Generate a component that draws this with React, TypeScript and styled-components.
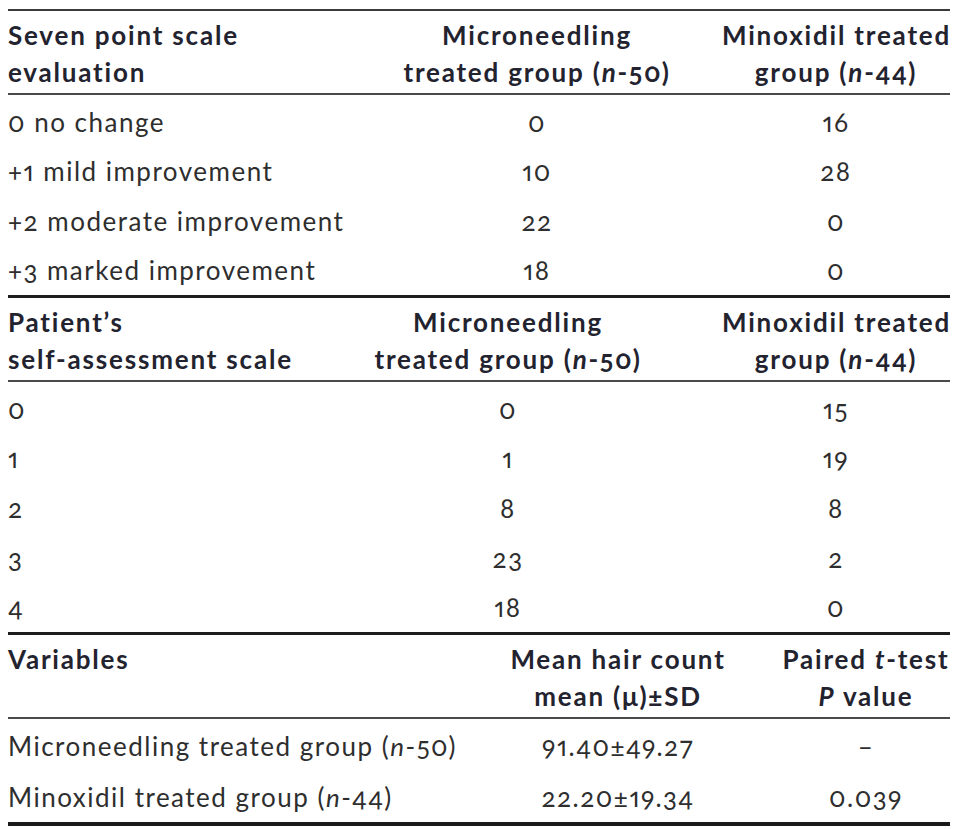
import styled, { createGlobalStyle } from "styled-components";

const GlobalStyle = createGlobalStyle`
  body {
    margin: 0;
    background: #ffffff;
  }
`;

const Page = styled.div`
  padding: 9px 12px 0 8px;
  width: 942px;
  font-family: "Lato", "Open Sans", sans-serif;
  font-variant-numeric: oldstyle-nums proportional-nums;
  font-feature-settings: "onum" 1;
  color: #2e2e2e;
`;

interface ISection {
  columns: string;
  top: "thin" | "thick";
}

const Section = styled.div<ISection>`
  display: grid;
  grid-template-columns: ${(props) => props.columns};
  border-top: ${(props) =>
    props.top === "thin" ? "2px solid #3a3a3a" : "3px solid #1c1c1c"};
`;

const Head = styled.div<{ align?: "left" | "center" }>`
  padding: 6px 0 2px;
  font-size: 26px;
  font-weight: 700;
  letter-spacing: 1.8px;
  line-height: 37px;
  color: #23232f;
  white-space: nowrap;
  text-align: ${(props) => props.align || "center"};
  border-bottom: 2px solid #4a4a4a;
  margin-bottom: 2px;
`;

const Cell = styled.div<{ align?: "left" | "center"; h: number }>`
  height: ${(props) => props.h}px;
  display: flex;
  align-items: center;
  justify-content: ${(props) =>
    props.align === "left" ? "flex-start" : "center"};
  font-size: 26px;
  letter-spacing: 1.5px;
  white-space: nowrap;
`;

const Bottom = styled.div`
  border-top: 4px solid #1a1a1a;
`;

const sevenPoint = [
  ["0 no change", "0", "16"],
  ["+1 mild improvement", "10", "28"],
  ["+2 moderate improvement", "22", "0"],
  ["+3 marked improvement", "18", "0"],
];

const selfAssessment = [
  ["0", "0", "15"],
  ["1", "1", "19"],
  ["2", "8", "8"],
  ["3", "23", "2"],
  ["4", "18", "0"],
];

function Group({ n }: { n: string }) {
  return (
    <>
      (<i>n</i>-{n})
    </>
  );
}

function App() {
  return (
    <>
      <GlobalStyle />
      <Page>
        <Section columns="344px 370px 228px" top="thin">
          <Head align="left">
            Seven point scale
            <br />
            evaluation
          </Head>
          <Head>
            Microneedling
            <br />
            treated group <Group n="50" />
          </Head>
          <Head>
            Minoxidil treated
            <br />
            group <Group n="44" />
          </Head>
          {sevenPoint.map((row) =>
            row.map((value, i) => (
              <Cell key={row[0] + i} h={49.5} align={i === 0 ? "left" : "center"}>
                {value}
              </Cell>
            ))
          )}
        </Section>

        <Section columns="286px 428px 228px" top="thick">
          <Head align="left">
            Patient’s
            <br />
            self-assessment scale
          </Head>
          <Head>
            Microneedling
            <br />
            treated group <Group n="50" />
          </Head>
          <Head>
            Minoxidil treated
            <br />
            group <Group n="44" />
          </Head>
          {selfAssessment.map((row) =>
            row.map((value, i) => (
              <Cell key={row[0] + i} h={49.6} align={i === 0 ? "left" : "center"}>
                {value}
              </Cell>
            ))
          )}
        </Section>

        <Section columns="446px 328px 168px" top="thick">
          <Head align="left">
            Variables
            <br />
            &nbsp;
          </Head>
          <Head>
            Mean hair count
            <br />
            mean (μ)±SD
          </Head>
          <Head>
            Paired <i>t</i>-test
            <br />
            <i>P</i> value
          </Head>
          <Cell h={50.5} align="left">
            Microneedling treated group <Group n="50" />
          </Cell>
          <Cell h={50.5}>91.40±49.27</Cell>
          <Cell h={50.5}>–</Cell>
          <Cell h={50.5} align="left">
            Minoxidil treated group <Group n="44" />
          </Cell>
          <Cell h={50.5}>22.20±19.34</Cell>
          <Cell h={50.5}>0.039</Cell>
        </Section>
        <Bottom />
      </Page>
    </>
  );
}

export default App;
